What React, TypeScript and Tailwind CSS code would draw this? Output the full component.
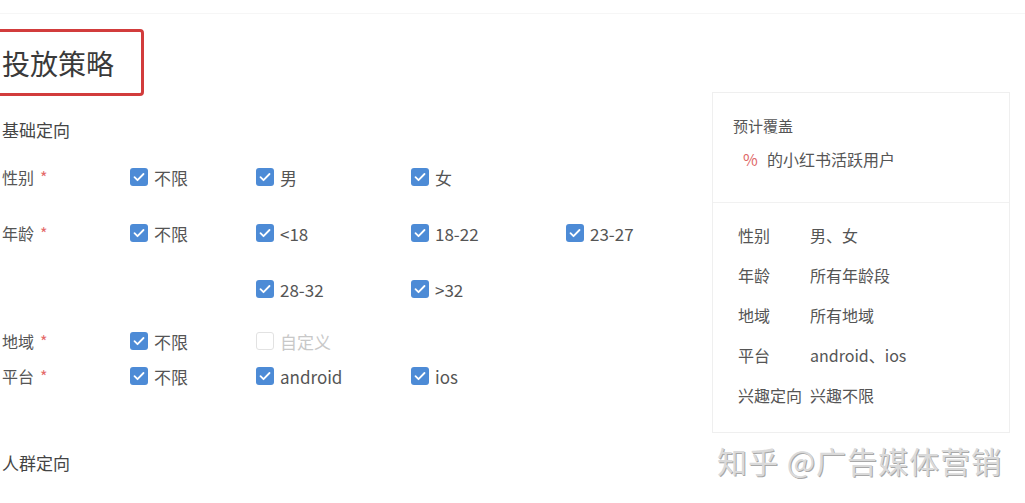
import React from 'react';

const FONT = "font-['Noto_Sans_CJK_SC','Noto_Sans',sans-serif]";

type Opt = { label: string; checked?: boolean };

const Check = ({ label, checked = true }: Opt) => (
  <div className="flex items-center gap-[6px]">
    {checked ? (
      <span className="flex h-[18px] w-[18px] items-center justify-center rounded-[3px] bg-[#4d8bd6]">
        <svg viewBox="0 0 18 18" className="h-[18px] w-[18px]">
          <path d="M4.5 9.2l3 3 6-6.2" fill="none" stroke="#fff" strokeWidth="1.8" strokeLinecap="round" strokeLinejoin="round" />
        </svg>
      </span>
    ) : (
      <span className="h-[18px] w-[18px] rounded-[3px] border border-[#e2e2e2] bg-white" />
    )}
    <span className={`text-[17px] leading-none ${checked ? 'text-[#555]' : 'text-[#c8c8c8]'}`}>{label}</span>
  </div>
);

const Row = ({ label, opts, h }: { label?: string; opts: (Opt | null)[]; h: string }) => (
  <div className={`flex items-center ${h}`}>
    <div className="w-[128px] shrink-0 text-[16px] text-[#555]">
      {label && (
        <>
          {label}
          <span className="ml-[6px] text-[#e46a6a]">*</span>
        </>
      )}
    </div>
    {opts.map((o, i) => (
      <div key={i} className={i === 0 ? 'w-[126px] shrink-0' : 'w-[155px] shrink-0'}>
        {o && <Check {...o} />}
      </div>
    ))}
  </div>
);

const summary = [
  ['性别', '男、女'],
  ['年龄', '所有年龄段'],
  ['地域', '所有地域'],
  ['平台', 'android、ios'],
  ['兴趣定向', '兴趣不限'],
];

export default function App() {
  return (
    <div className={`relative h-[503px] w-[1025px] overflow-hidden bg-white ${FONT}`}>
      <div className="h-[14px] border-b border-[#f6f6f6]" />
      <div className="flex">
        {/* left form */}
        <div className="w-[712px] shrink-0 pl-[2px]">
          <div className="-ml-[12px] mt-[15px] flex h-[67px] w-[154px] items-center rounded-[4px] border-[3px] border-[#d23c3c] pl-[9px]">
            <span className="text-[28px] leading-none text-[#3a3a3a]">投放策略</span>
          </div>
          <div className="mt-[17px] flex h-[34px] items-center text-[17px] text-[#444]">基础定向</div>
          <div className="mt-[2px]">
            <Row h="h-[56px]" label="性别" opts={[{ label: '不限' }, { label: '男' }, { label: '女' }]} />
            <Row
              h="h-[56px]"
              label="年龄"
              opts={[{ label: '不限' }, { label: '<18' }, { label: '18-22' }, { label: '23-27' }]}
            />
            <Row h="h-[56px]" opts={[null, { label: '28-32' }, { label: '>32' }]} />
            <Row h="h-[48px]" label="地域" opts={[{ label: '不限' }, { label: '自定义', checked: false }]} />
            <Row h="h-[22px]" label="平台" opts={[{ label: '不限' }, { label: 'android' }, { label: 'ios' }]} />
          </div>
          <div className="mt-[64px] flex h-[24px] items-center text-[17px] text-[#444]">人群定向</div>
        </div>

        {/* right summary */}
        <div className="mt-[78px] h-[341px] w-[298px] shrink-0 border border-[#efefef]">
          <div className="h-[110px] border-b border-[#f1f1f1] pl-[20px] pt-[22px]">
            <div className="text-[15px] leading-[22px] text-[#555]">预计覆盖</div>
            <div className="ml-[10px] mt-[11px] flex items-center text-[16px] leading-[22px]">
              <span className="w-[24px] text-[#e06a6a]">%</span>
              <span className="text-[#555]">的小红书活跃用户</span>
            </div>
          </div>
          <div className="pl-[25px] pt-[12px]">
            {summary.map(([k, v]) => (
              <div key={k} className="flex h-[40px] items-center text-[16px] text-[#555]">
                <span className="w-[72px] whitespace-nowrap">{k}</span>
                <span className="whitespace-nowrap">{v}</span>
              </div>
            ))}
          </div>
        </div>
      </div>

      <div className="absolute left-[717px] top-[441px] whitespace-nowrap text-[30px] leading-[38px] tracking-[1px] text-[#dadada] [text-shadow:1px_1px_0_#a8a8a8]">
        知乎 @广告媒体营销
      </div>
    </div>
  );
}
